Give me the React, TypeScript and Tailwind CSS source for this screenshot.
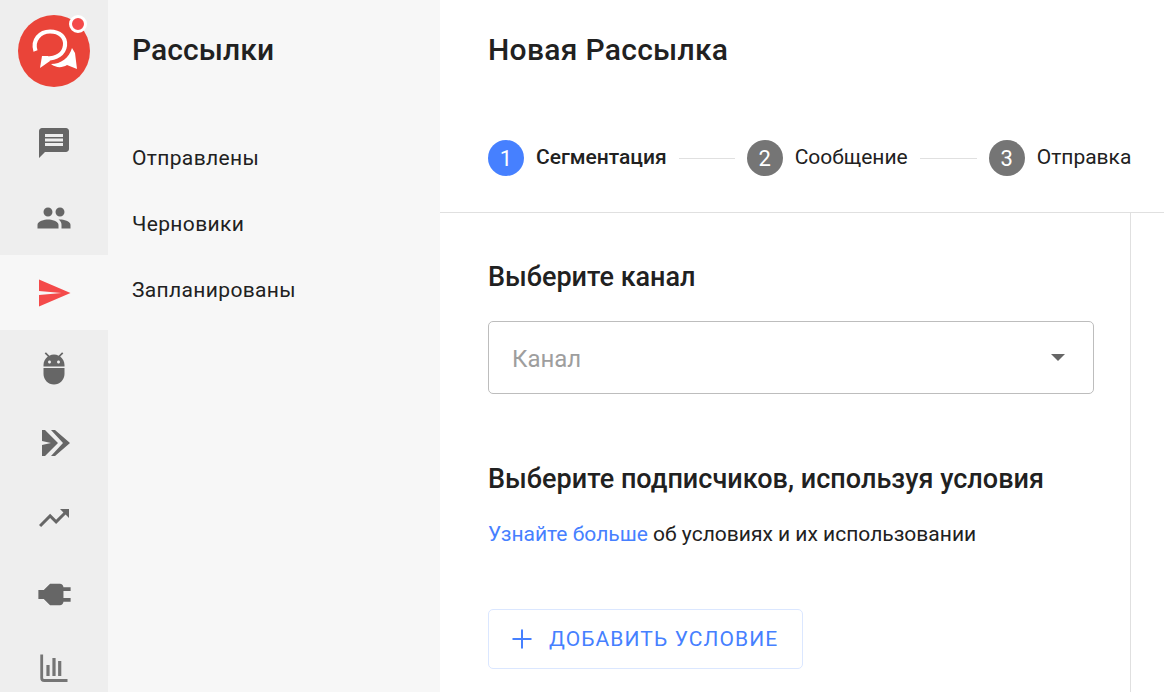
import React from 'react';
import { Plus } from 'lucide-react';

const Icon: React.FC<{ d: string; className?: string; size?: number }> = ({ d, className, size = 36 }) => (
  <svg width={size} height={size} viewBox="0 0 24 24" fill="currentColor" className={className}>
    <path d={d} />
  </svg>
);

const Logo = () => (
  <div className="relative w-[72px] h-[72px] rounded-full bg-[#ea4439]">
    <svg width="72" height="72" viewBox="0 0 72 72" className="absolute inset-0">
      <path d="M17.5 36C14 25 22 16.5 32 16.5c10 0 16 6 15 14-1 8-8 13-19 13" fill="none" stroke="#fff" strokeWidth="4.2" />
      <path d="M30 41h-6l-2 12 10-7z" fill="#fff" />
      <path d="M33 49c10 0 18-6 21-16l3 5 2 16-10-4c-5 3-11 3-16-1z" fill="#fff" />
    </svg>
    <div className="absolute top-0 right-[3px] w-[18px] h-[18px] rounded-full bg-[#f44a4a] border-[3px] border-white" />
  </div>
);

const railItems = [
  'M20 2H4c-1.1 0-1.99.9-1.99 2L2 22l4-4h14c1.1 0 2-.9 2-2V4c0-1.1-.9-2-2-2zM18 14H6v-2h12v2zm0-3H6V9h12v2zm0-3H6V6h12v2z',
  'M16 11c1.66 0 2.99-1.34 2.99-3S17.66 5 16 5c-1.66 0-3 1.34-3 3s1.34 3 3 3zm-8 0c1.66 0 2.99-1.34 2.99-3S9.66 5 8 5C6.34 5 5 6.34 5 8s1.34 3 3 3zm0 2c-2.33 0-7 1.17-7 3.5V19h14v-2.5c0-2.33-4.67-3.5-7-3.5zm8 0c-.29 0-.62.02-.97.05 1.16.84 1.97 1.97 1.97 3.45V19h6v-2.5c0-2.33-4.67-3.5-7-3.5z',
];

const Rail = () => (
  <div className="w-[108px] h-full shrink-0 bg-[#eeeeee] flex flex-col items-center overflow-hidden">
    <div className="h-[105px] pt-[15px] shrink-0">
      <Logo />
    </div>
    {railItems.map((d) => (
      <div key={d} className="h-[75px] w-full shrink-0 flex items-center justify-center text-[#666666]">
        <Icon d={d} />
      </div>
    ))}
    <div className="h-[75px] w-full shrink-0 flex items-center justify-center bg-[#f7f7f7] text-[#f44a4a]">
      <Icon d="M2.01 21L23 12 2.01 3 2 10.7l15 1.3-15 1.3z" />
    </div>
    <div className="h-[75px] w-full shrink-0 flex items-center justify-center text-[#666666]">
      <Icon d="M5 16c0 3.87 3.13 7 7 7s7-3.13 7-7v-4H5v4zM16.12 4.37l2.1-2.1-.82-.83-2.3 2.31C14.16 3.28 13.12 3 12 3s-2.16.28-3.09.75L6.6 1.44l-.82.83 2.1 2.1C6.14 5.64 5 7.68 5 10v1h14v-1c0-2.32-1.14-4.36-2.88-5.63zM9 9c-.55 0-1-.45-1-1s.45-1 1-1 1 .45 1 1-.45 1-1 1zm6 0c-.55 0-1-.45-1-1s.45-1 1-1 1 .45 1 1-.45 1-1 1z" />
    </div>
    <div className="h-[75px] w-full shrink-0 flex items-center justify-center text-[#666666]">
      <svg width="36" height="36" viewBox="0 0 36 36" fill="currentColor">
        <path d="M6 5h3l13 13L9 31H6V20l9-2-9-2z" />
        <path d="M15 5h4l15 13-15 13h-4l12-13z" />
      </svg>
    </div>
    <div className="h-[75px] w-full shrink-0 flex items-center justify-center text-[#666666]">
      <Icon d="M16 6l2.29 2.29-4.88 4.88-4-4L2 16.59 3.41 18l6-6 4 4 6.3-6.29L22 12V6z" />
    </div>
    <div className="h-[75px] w-full shrink-0 flex items-center justify-center text-[#666666]">
      <Icon size={43} className="rotate-90 mt-1" d="M16.01 7L16 3h-2v4h-4V3H8v4h-.01C7 6.99 6 7.99 6 8.99v5.49L9.5 18v3h5v-3l3.5-3.51v-5.5c0-1-1-2-1.99-1.99z" />
    </div>
    <div className="h-[75px] w-full shrink-0 flex items-center justify-center text-[#757575]">
      <svg width="36" height="36" viewBox="0 0 36 36" fill="none" stroke="currentColor">
        <path d="M5.7 4.5V28c0 1.5 1 2.5 2.5 2.5h23.3" strokeWidth="2.8" />
        <path d="M12 15v11M18 8v18M23.7 11v15" strokeWidth="3.2" />
      </svg>
    </div>
  </div>
);

const Step: React.FC<{ n: number; label: string; active?: boolean }> = ({ n, label, active }) => (
  <div className="flex items-center gap-3 shrink-0">
    <div className={`w-9 h-9 rounded-full flex items-center justify-center text-white text-[22px] ${active ? 'bg-[#4680ff]' : 'bg-[#757575]'}`}>
      {n}
    </div>
    <span className={`text-[21px] text-[#212121] ${active ? 'font-medium' : ''}`}>{label}</span>
  </div>
);

export default function App() {
  return (
    <div className="flex h-[692px] w-[1164px] overflow-hidden bg-white font-['Roboto',sans-serif] text-[#212121]">
      <Rail />
      <aside className="w-[332px] shrink-0 bg-[#f7f7f7] pl-6">
        <h2 className="text-[30px] leading-[30px] font-medium mt-[35px] mb-[82px] tracking-[0.1px]">Рассылки</h2>
        <nav className="flex flex-col gap-[44px] text-[21px] leading-[22px] tracking-[0.35px]">
          <a>Отправлены</a>
          <a>Черновики</a>
          <a>Запланированы</a>
        </nav>
      </aside>
      <main className="flex-1 min-w-0 flex flex-col">
        <header className="h-[213px] shrink-0 border-b border-[#e0e0e0] pl-12">
          <h1 className="text-[30px] leading-[30px] font-medium pt-[35px] tracking-[0.3px] h-[65px] box-content pb-0">Новая Рассылка</h1>
          <div className="flex items-center mt-[40px]">
            <Step n={1} label="Сегментация" active />
            <div className="w-[56px] h-px bg-[#e0e0e0] mx-3 shrink-0" />
            <Step n={2} label="Сообщение" />
            <div className="w-[57px] h-px bg-[#e0e0e0] mx-3 shrink-0" />
            <Step n={3} label="Отправка" />
          </div>
        </header>
        <div className="flex-1 min-h-0 flex">
          <div className="w-[691px] shrink-0 border-r border-[#e0e0e0] pl-12 pr-9">
            <h3 className="text-[27px] leading-[28px] font-medium mt-[50px]">Выберите канал</h3>
            <div className="mt-[30px] h-[73px] rounded-[5px] border border-[#bdbdbd] flex items-center justify-between pl-[23px] pr-[28px]">
              <span className="text-[24px] text-[#9e9e9e] pt-[2px]">Канал</span>
              <div className="w-0 h-0 border-x-[7px] border-x-transparent border-t-[7px] border-t-[#666666]" />
            </div>
            <h3 className="text-[27px] leading-[28px] font-medium mt-[71px] tracking-[0.03px]">Выберите подписчиков, используя условия</h3>
            <p className="text-[21px] leading-[22px] mt-[30px]">
              <a className="text-[#4680ff]">Узнайте больше</a> об условиях и их использовании
            </p>
            <button className="mt-[64px] h-[60px] w-[315px] rounded-[5px] border border-[#dbe7ff] flex items-center pl-[18px] gap-3 text-[#4680ff] text-[21px] tracking-[1.1px]">
              <Plus size={30} strokeWidth={1.6} />
              <span className="pt-px">ДОБАВИТЬ УСЛОВИЕ</span>
            </button>
          </div>
        </div>
      </main>
    </div>
  );
}
